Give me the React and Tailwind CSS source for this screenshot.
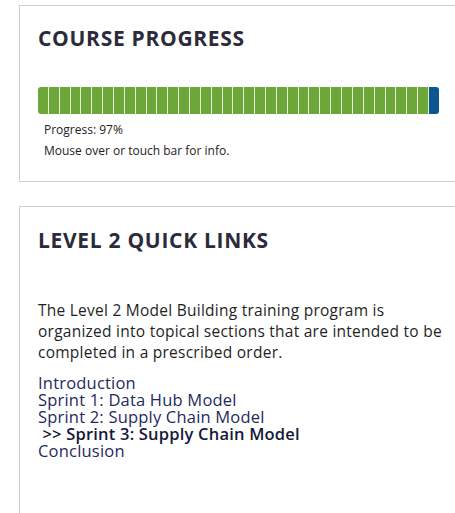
import React from "react";

export default function App() {
  const segs = Array.from({ length: 37 });
  return (
    <div className="w-[455px] h-[513px] overflow-hidden bg-white" style={{ fontFamily: '"Open Sans", sans-serif' }}>
      <div className="ml-[19px] mt-[5px] border-l border-t border-b border-[#cfcfcf] pl-[18px] pt-[18px] pb-[20px]">
        <h2 className="text-[21px] leading-[28px] font-bold text-[#2b2b3b] tracking-[0.7px]">COURSE PROGRESS</h2>
        <div className="mt-[35px] flex h-[27px] w-[401px] rounded-[3px] overflow-hidden">
          {segs.map((_, i) => (
            <div
              key={i}
              className={
                i === 36
                  ? "flex-1 bg-[#0b5591] border-l border-[#dff0c8]"
                  : i === 0
                  ? "flex-1 bg-[#6da73a]"
                  : "flex-1 bg-[#6da73a] border-l border-[#e6f3d6]"
              }
            />
          ))}
        </div>
        <div className="pl-[6px] mt-[5px] text-[12px] leading-[21px] text-[#222]">
          <p>Progress: 97%</p>
          <p>Mouse over or touch bar for info.</p>
        </div>
      </div>
      <div className="ml-[19px] mt-[24px] border-l border-t border-[#cfcfcf] pl-[18px] pt-[19px] h-[320px]">
        <h2 className="text-[21px] leading-[28px] font-bold text-[#2b2b3b] tracking-[0.7px]">LEVEL 2 QUICK LINKS</h2>
        <p className="mt-[46px] text-[15.5px] leading-[21px] tracking-[0.25px] text-[#1f1f1f] pr-[10px]">
          The Level 2 Model Building training program is organized into topical sections that are intended to be completed in a prescribed order.
        </p>
        <div className="mt-[11px] text-[16.5px] leading-[17px] tracking-[0.2px] text-[#1f2a5c]">
          <p>Introduction</p>
          <p>Sprint 1: Data Hub Model</p>
          <p>Sprint 2: Supply Chain Model</p>
          <p className="font-semibold text-[#141838]">&nbsp;&gt;&gt; Sprint 3: Supply Chain Model</p>
          <p>Conclusion</p>
        </div>
      </div>
    </div>
  );
}
